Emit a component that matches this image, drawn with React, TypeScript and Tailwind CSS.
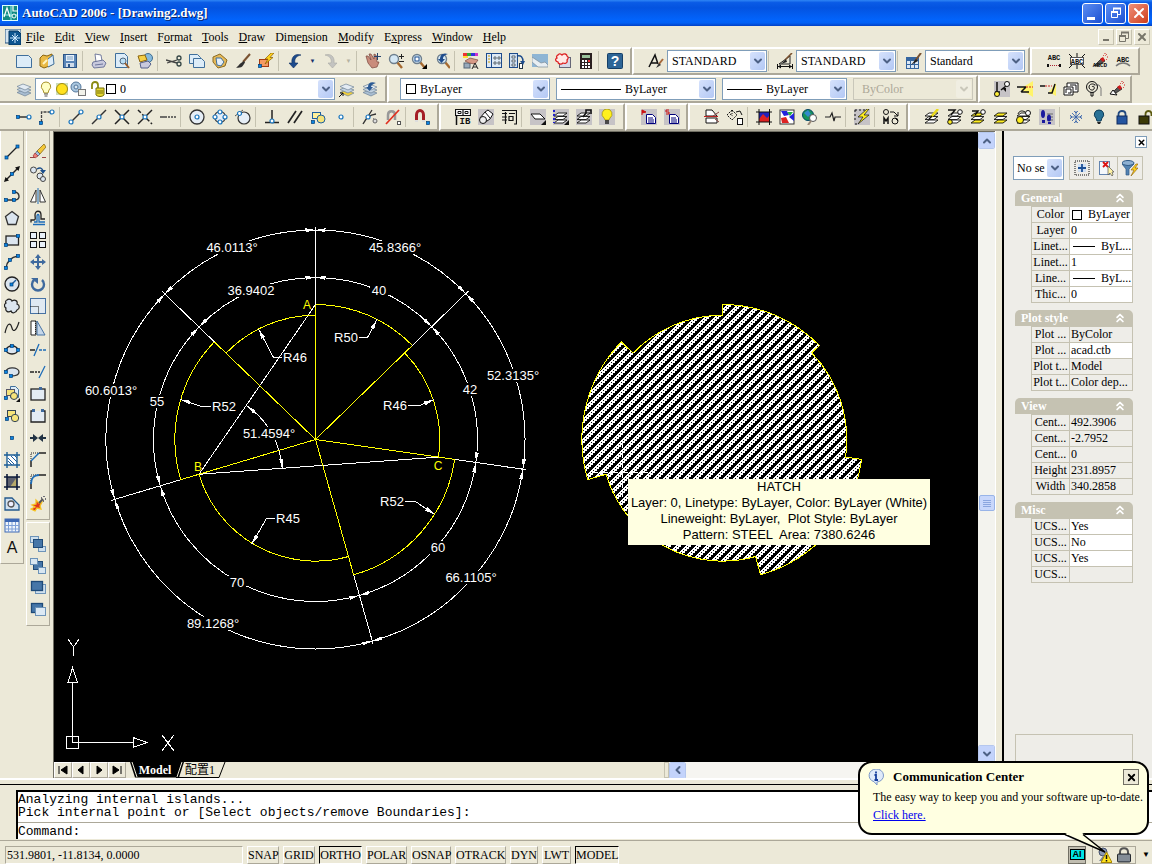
import type { ReactNode } from 'react';
import { ChevronDown, ChevronLeft, ChevronUp, ChevronsUp, X } from 'lucide-react';

/* ---------- icons, all on a 16x16 grid ---------- */

const Dot = ({ x, y }) => <rect x={x - 1.5} y={y - 1.5} width="3" height="3" fill="#0a84e0" stroke="#023e78" strokeWidth="0.7" />;
const Ring = ({ x, y, r = 2 }) => <circle cx={x} cy={y} r={r} fill="#fff" stroke="#1874bd" strokeWidth="1.2" />;
const Gray = () => <rect width="16" height="16" fill="#c6c3c6" />;
const Page = ({ x = 0, y = 0, w = 14, h = 10 }) => (
  <path d={`M${x + 0.5} ${y + 0.5}h${w - 3}l3 3v${h - 3}h-${w}z`} fill="#dcecf8" stroke="#3f6f9c" />
);
const Sheets = ({ low = '#a9bed2' }) => (
  <g stroke="#6f8397" strokeWidth="0.7">
    <path d="M1 11.5l6-2.500 8 3-6 3z" fill={low} />
    <path d="M1 8.500l6-2.500 8 3-6 3z" fill="#c3d3e2" />
    <path d="M1 5.500l6-2.500 8 3-6 3z" fill="#e3ebf3" />
  </g>
);
const Lens = ({ x = 6, y = 6 }) => (
  <g>
    <path d={`M${x + 3} ${y + 3}l5 6`} stroke="#a66a30" strokeWidth="2.4" />
    <circle cx={x} cy={y} r="4.500" fill="#d5e8f5" stroke="#6e7f8e" strokeWidth="1.4" />
  </g>
);
const Brush = () => (
  <g>
    <path d="M15 1L8 9" stroke="#7a5230" strokeWidth="2" />
    <path d="M9 8L6 10c-2 1-2 3-5 4.500 3 .5 6 0 7-2l2-3z" fill="#2f2f2f" />
  </g>
);
const Bolt = () => <path d="M13 0L7 6h3l-3 5 8-6.500h-3L16 0z" fill="#ffd21c" stroke="#8a5b00" strokeWidth="0.7" />;
const Square = ({ x, y, s = 6, f = '#e8f0f8' }) => <rect x={x + 0.5} y={y + 0.5} width={s} height={s} fill={f} stroke="#111" />;
const Laser = () => (
  <g>
    <path d="M2 13l8-8 3 3-6 4z" fill="#555" stroke="#111" strokeWidth="0.7" />
    <path d="M8 6l3-2 2 3-2 2z" fill="#d11b1b" />
    <path d="M11 2l1 1m1-3v2m2-1l-2 2m3 1h-2m1 3l-1-1" stroke="#d11b1b" strokeDasharray="1 1" />
  </g>
);
const Stack = ({ f = '#fff' }) => (
  <g stroke="#111" fill={f} strokeWidth="0.9">
    <path d="M1 14h9l4-3H5z" />
    <path d="M1 10.500h9l4-3H5z" fill="#fff" />
    <path d="M1 7h9l4-3H5z" />
  </g>
);

const icons: Record<string, ReactNode> = {
  // standard
  new: <Page x={0} y={2} w={15} h={12} />,
  open: <g><path d="M1 5l3-3 4 1 5-2v11l-8 3-4-2z" fill="#e9b944" stroke="#8b6510" /><path d="M9 6l5-4 1 9-6 3" fill="#dcecf8" stroke="#3f6f9c" /><path d="M4 11l4-4" stroke="#fff3c0" strokeWidth="2" /></g>,
  save: <g><rect x="1.500" y="1.500" width="13" height="13" fill="#5b86b8" stroke="#2c5588" /><rect x="4" y="2" width="8" height="6" fill="#e6f0fa" /><path d="M5 4h6M5 6h6" stroke="#7da0c4" /><rect x="4" y="10" width="8" height="4" fill="#d0dcea" /><rect x="6" y="11" width="2" height="3" fill="#2c5588" /></g>,
  print: <g stroke="#55608a" strokeWidth="0.8"><path d="M4 1l6 1 1 6-6 1z" fill="#fff" /><path d="M2 9l10-2 3 3-2 4-10 1-2-3z" fill="#c8c9dd" /><path d="M4 12l8-1" /></g>,
  preview: <g><Page x={1} y={0} w={12} h={14} /><circle cx="9" cy="8" r="3" fill="#b9def5" stroke="#51677c" /><path d="M11 10l4 5" stroke="#9a5d2a" strokeWidth="2" /></g>,
  publish: <g><circle cx="11" cy="5" r="4.500" fill="#86b9dc" stroke="#416e91" /><path d="M1 3l7-1 2 5-7 2z" fill="#f5cf45" stroke="#8b6510" /><path d="M3 10l8-2 3 3-3 4-7 0z" fill="#c8c9dd" stroke="#55608a" /></g>,
  cut: <g><path d="M0 7l11 3M1 10l10-3" stroke="#444" strokeWidth="1.300" /><circle cx="13" cy="5" r="2" fill="none" stroke="#344" strokeWidth="1.300" /><circle cx="13" cy="11" r="2" fill="none" stroke="#344" strokeWidth="1.300" /></g>,
  copyclip: <g><Page x={0} y={1} w={11} h={9} /><Page x={4} y={5} w={11} h={9} /></g>,
  paste: <g><path d="M1 4l7-3 7 6-2 6-7 2-5-6z" fill="#e5b958" stroke="#8b6a22" /><path d="M4 5l5 0 3 4-3 4-4-1z" fill="#e4eef8" stroke="#3f6f9c" /></g>,
  match: <Brush />,
  bedit: <g><rect x="1.500" y="6.500" width="9" height="7" fill="#f59a62" stroke="#a33b14" /><Bolt /><Dot x={2} y={13} /></g>,
  undo: <path d="M14 2c-6-2-10 2-9 8H2l4.500 5L11 10H8c-1-4 1-7 6-8z" fill="#1d4b8c" stroke="#0e2f61" strokeWidth="0.600" />,
  redo: <path d="M2 2c6-2 10 2 9 8h3l-4.500 5L5 10h3c1-4-1-7-6-8z" fill="#c3c3c0" stroke="#a9a9a4" strokeWidth="0.600" />,
  pan: <g><path d="M1 3l2 0 3 4-2-6 2 0 3 5 0-5 2 1 1 7 2 0-2 5-5 1-4-5z" fill="#c98c7c" stroke="#7a463c" strokeWidth="0.700" /><path d="M12.500 0v7M9 3.500h7" stroke="#29456d" /></g>,
  zoomrt: <g><Lens /><path d="M13.500 1v5M11 3.500h5M11 8.500h5" stroke="#222" /></g>,
  zoomwin: <g><Lens /><rect x="4" y="4" width="4" height="4" fill="#fff" stroke="#1c4e90" /><path d="M16 11v5h-5z" fill="#000" /></g>,
  zoomprev: <g><Lens x={8} /><path d="M14 1C8-1 6 3 6 6H4l3.500 4L11 6H9c0-2 1-4 5-5z" fill="#1d4b8c" /></g>,
  props: <g><rect width="4" height="3" fill="#e33" /><rect x="4" width="4" height="3" fill="#3a3" /><rect x="8" width="4" height="3" fill="#33d" /><rect x="12" width="3" height="3" fill="#c3c" /><rect y="3" width="5" height="2" fill="#fd3" /><rect x="1" y="10" width="6" height="5" fill="#9ab" stroke="#567" /><path d="M2 8l5-3 8 2-3 4-6-1z" fill="#d79a86" stroke="#7a463c" strokeWidth="0.700" /><path d="M9 16l3-6 3 6m-5-2h4" stroke="#222" fill="none" /></g>,
  dc: <g><rect x="0.500" y="0.500" width="15" height="14" fill="#dfeaf5" stroke="#1d4b8c" /><path d="M5.500 0v15" stroke="#1d4b8c" /><path d="M2 3h2M2 6h2M2 9h2" stroke="#c90" /><path d="M8 4h2v2H8zM12 4h2v2h-2zM8 9h2v2H8zM12 9h2v2h-2z" fill="#fff" stroke="#234" strokeWidth="0.700" /></g>,
  palettes: <g><rect x="0.500" y="0.500" width="8" height="14" fill="#cfdff0" stroke="#1d4b8c" /><path d="M3 3h3v2H3zM3 7h3v2H3zM3 11h3v2H3z" fill="#fff" stroke="#234" strokeWidth="0.700" /><path d="M8 3c4-1 6 1 6 6" fill="none" stroke="#1d4b8c" strokeWidth="1.500" /><rect x="10.500" y="10.500" width="3" height="5" fill="#fff" stroke="#234" /><path d="M11 8h5l-2 4z" fill="#1d4b8c" /></g>,
  ssm: <g><rect y="1" width="16" height="13" fill="#8eb5d4" /><path d="M0 4l9 6 4-1 3 3v2H6L0 9z" fill="#e8eef2" stroke="#7d8c98" strokeWidth="0.700" /></g>,
  markup: <g><rect x="4.500" y="4.500" width="11" height="10" fill="#d8d8e8" stroke="#667" /><path d="M3 2c1-2 3-1 4 0 2-2 5-1 5 1 2 1 1 3 0 4 1 3-2 4-4 3-2 2-5 1-5-1-3-1-3-3-1-4-1-1 0-3 1-3z" fill="#ffe9e6" stroke="#d22" strokeWidth="1.300" /></g>,
  calc: <g><rect x="2" y="0" width="12" height="16" fill="#2b2020" /><rect x="4" y="2" width="8" height="3" fill="#9ac29a" /><path d="M4 8h8M4 11h8M4 14h8" stroke="#fff" strokeWidth="2" strokeDasharray="2 1" /><rect x="10" y="7" width="2" height="2" fill="#e33" /></g>,
  help: <g><rect x="0.500" y="0.500" width="15" height="15" rx="1" fill="#2d6596" stroke="#153f66" /><text x="8" y="13" fontSize="14" fontWeight="bold" textAnchor="middle" fill="#fff" fontFamily="Liberation Sans">?</text></g>,
  textstyle: <g><path d="M1 14L7 2l3 9M3 10h6" fill="none" stroke="#111" strokeWidth="1.500" /><path d="M15 6l-4 5" stroke="#a6683a" strokeWidth="2" /><path d="M11 10l-3 5 5-3z" fill="#333" /></g>,
  dimstyle: <g><path d="M13 3v8L2 11z" fill="none" stroke="#222" /><path d="M15 0L8 7" stroke="#7a5230" strokeWidth="1.600" /><path d="M9 6l-5 5 6-2z" fill="#222" /><path d="M0 13.500h16M.5 11v5M15.500 11v5" stroke="#111" /><path d="M1 13.500l3-2v4zM15 13.500l-3-2v4z" fill="#111" /></g>,
  tablestyle: <g><rect x="0.500" y="4.500" width="12" height="11" fill="#dbe8f6" stroke="#3566a0" /><path d="M0 6.500h13" stroke="#3566a0" strokeWidth="3" /><path d="M4.500 5v10M8.500 5v10M1 11.500h11" stroke="#3566a0" /><path d="M15 0L9 8" stroke="#7a5230" strokeWidth="2" /><path d="M10 6l-5 6 7-4z" fill="#222" /></g>,
  // express text
  abc1: <g><text x="8" y="7" fontSize="7" textAnchor="middle" fontWeight="bold" fontFamily="Liberation Mono">ABC</text><path d="M2 12.500h12" stroke="#a23" strokeDasharray="1 1" /><path d="M1 11h2v3H1zM13 11h2v3h-2z" fill="#111" /></g>,
  abc2: <g><path d="M0 1l3 3M16 1l-3 3M0 15l3-3M16 15l-3-3M8 0v4M8 12v4" stroke="#111" /><rect x="1.500" y="4.500" width="13" height="7" fill="#fff" stroke="#555" /><text x="8" y="10.500" fontSize="7" textAnchor="middle" fontWeight="bold" fontFamily="Liberation Mono">ABC</text></g>,
  abc3: <g><Laser /><text x="8" y="14" fontSize="6" textAnchor="middle" fontWeight="bold" fontFamily="Liberation Mono">ABCD</text></g>,
  abc4: <g><text x="8" y="9" fontSize="7" textAnchor="middle" fontWeight="bold" fontFamily="Liberation Mono">ABC</text><path d="M1 13c4-4 10-4 14 0" fill="none" stroke="#777" strokeWidth="1.500" /></g>,
  // layers
  layers: <Sheets />,
  laymcur: <g><Sheets low="#f0cf3c" /><path d="M0 16l4-4M1 12h3v3" stroke="#111" fill="none" /></g>,
  layprev: <g><Sheets /><path d="M14 2C9 0 6 2 6 6H4l3.500 4L11 6H9c0-2 2-3 5-4z" fill="#2b5a94" /></g>,
  bulb: <g><path d="M8 1a4.500 4.500 0 0 0-3 8l1 3h4l1-3a4.500 4.500 0 0 0-3-8z" fill="#ffffc4" stroke="#a8922c" /><path d="M6 13h4M6.500 15h3" stroke="#555" /></g>,
  sun: <g><rect x="2" y="2" width="12" height="12" fill="#cdb" /><circle cx="8" cy="8" r="5.500" fill="#ffe11f" stroke="#a08b10" /></g>,
  vpfreeze: <g><circle cx="6" cy="6" r="5" fill="#a9c6df" stroke="#54779b" /><circle cx="6" cy="6" r="2" fill="#dce9f4" stroke="#54779b" /><rect x="8.500" y="8.500" width="7" height="6" fill="#f2f2ea" stroke="#777" /></g>,
  unlock: <g><path d="M2 8V4c0-4 6-4 6 0v3" fill="none" stroke="#8a8a12" strokeWidth="1.800" /><path d="M6 7h8v7c-2 2-6 2-8 0z" fill="#e6d832" stroke="#77700c" /><path d="M7 10h6M7 12h6" stroke="#77700c" /></g>,
  // express blocks
  blk1: <g><Gray /><path d="M3 1v10M1 11h5M7 9l5-4" stroke="#111" strokeWidth="1.500" /><circle cx="3" cy="13" r="2.500" fill="#ffef3a" stroke="#111" /><circle cx="13" cy="3" r="2.500" fill="#fff" stroke="#111" /><path d="M8 7h4v4z" fill="#111" /></g>,
  blk2: <g><path d="M16 0v16L3 8z" fill="#fff46a" /><path d="M0 6h9M4 11h8M9 6l-5 5" stroke="#111" strokeWidth="1.500" /><path d="M9 6h7" stroke="#c22" strokeDasharray="2 1" /></g>,
  blk3: <g><path d="M16 2v13L9 11z" fill="#fff46a" /><path d="M0 5h5M8 12h4l3-9" stroke="#111" strokeWidth="1.500" fill="none" /><path d="M5 5h7" stroke="#c22" strokeDasharray="2 1" /></g>,
  blk4: <g fill="none" stroke="#111"><path d="M4 6V2h11v9h-5" fill="#fff" /><path d="M1 6h9v8H1z" fill="#fff" /><path d="M3 12V8h5v4H5M7 4h6v5" /></g>,
  blk5: <g fill="none" stroke="#111"><path d="M8 4h5l2 3v8" stroke="#777" /><circle cx="6" cy="6" r="5.500" /><path d="M6 6c1-2 3 0 2 2s-5 1-5-2 4-4 6-2M5 11v4h2v-4" /></g>,
  erasex: <g><Laser /><path d="M1 13l3-4 4 5z" fill="#fff" stroke="#111" /></g>,
  // object snap
  ostrack: <g><path d="M2 8h10" stroke="#333" strokeWidth="1.500" /><Dot x={2} y={8} /><Ring x={13} y={8} /></g>,
  osfrom: <g><path d="M2.500 13V3h10" fill="none" stroke="#444" strokeWidth="1.300" strokeDasharray="3 1" /><Dot x={2} y={14} /><Ring x={13} y={3} /></g>,
  osend: <g><path d="M2 14L14 2" stroke="#333" strokeWidth="1.500" /><Ring x={3} y={13} /><Ring x={13} y={3} /></g>,
  osmid: <g><path d="M1 15L15 1" stroke="#333" strokeWidth="1.500" /><Ring x={8} y={8} /></g>,
  osint: <g><path d="M1 1l14 14M1 15L15 1" stroke="#222" strokeWidth="1.500" /><Ring x={8} y={8} /></g>,
  osapp: <g><path d="M1 15L15 1" stroke="#222" strokeWidth="1.500" /><path d="M1 1l14 14" stroke="#222" strokeWidth="1.500" strokeDasharray="4 2" /><Ring x={8} y={8} /></g>,
  osext: <path d="M0 8h16" stroke="#444" strokeWidth="1.500" strokeDasharray="7 1 2 1 2 1 2" />,
  oscen: <g><circle cx="8" cy="8" r="7" fill="#e6eef6" stroke="#333" strokeWidth="1.300" /><Ring x={8} y={8} /></g>,
  osqua: <g><circle cx="8" cy="8" r="5.500" fill="#e6eef6" stroke="#333" strokeWidth="1.200" /><Ring x={8} y={3} /><Ring x={8} y={13} /><Ring x={3} y={8} /><Ring x={13} y={8} /></g>,
  ostan: <g><circle cx="9" cy="9" r="6" fill="#e6eef6" stroke="#333" strokeWidth="1.200" /><path d="M0 7L8 1" stroke="#555" /><Ring x={4.500} y={4.500} /></g>,
  osper: <g><path d="M8 1v12M1 13.500h14" stroke="#222" strokeWidth="1.500" /><Ring x={8} y={12} /></g>,
  ospar: <path d="M1 14L9 2M7 14l8-12" stroke="#222" strokeWidth="1.700" />,
  osins: <g><rect x="2.500" y="3.500" width="8" height="6" fill="#fff09a" stroke="#1d5f9f" /><circle cx="11" cy="10" r="4" fill="#f5e37a" stroke="#1d5f9f" /><Dot x={3} y={13} /></g>,
  osnod: <Ring x={8} y={8} />,
  osnea: <g><path d="M1 15c3-6 6-9 13-10M5 9l5-8" fill="none" stroke="#333" strokeWidth="1.300" /><Ring x={6} y={8} /><path d="M11 9l4 4" stroke="#888" /><circle cx="13" cy="12" r="2" fill="#ddd" stroke="#666" /></g>,
  osnone: <g><path d="M3 11V6c0-5 7-5 7 0v5" fill="none" stroke="#999" strokeWidth="2.500" /><path d="M1 15L14 1" stroke="#e03020" strokeWidth="1.700" /><rect x="12.500" y="12.500" width="3" height="3" fill="#fff" stroke="#555" /></g>,
  ossnap: <g><path d="M2.500 12V6c0-6 7-6 7 0v6" fill="none" stroke="#a51d25" strokeWidth="3" /><path d="M1 12h3M8 12h3" stroke="#ddd" strokeWidth="2" /><Dot x={14} y={14} /></g>,
  // express standard
  lib: <g fill="none" stroke="#111"><path d="M.5.5h15v6H.5zM8 .5v6" fill="#fff" strokeWidth="1.200" /><path d="M3 2.500h3v2H3zM10 2.500h3v2h-3z" /><path d="M1.500 6v10" strokeWidth="1.500" /><text x="10" y="15" fontSize="9" fontWeight="bold" textAnchor="middle" stroke="none" fill="#111" fontFamily="Liberation Mono">IB</text></g>,
  cam: <g><Gray /><path d="M2 9l5-6 3-2 5 4-3 5-6 4z" fill="#fff" stroke="#111" /><circle cx="5" cy="11" r="3.500" fill="#eee" stroke="#111" /><path d="M7 3l5 6" stroke="#111" /></g>,
  vars: <path d="M1 1.500h14.500V15H13M4.500 3v12M1 4.500h5M1 8h5M1 11h5M8 4.500h6M8 7.500h4v4H8z" fill="none" stroke="#111" strokeWidth="1.200" />,
  ext1: <g><Gray /><path d="M1 5h9l5 5H5z" fill="#fff" stroke="#111" /><path d="M16 11v5h-5z" /></g>,
  ext2: <g><Gray /><Stack /><path d="M1 1v13" stroke="#22c" strokeWidth="2" strokeDasharray="2 2" /><path d="M16 11v5h-5z" /></g>,
  ext3: <g><Gray /><Stack /><path d="M7 8l3-4V1h5v4" fill="none" stroke="#111" strokeWidth="1.600" /></g>,
  lamp: <g><Gray /><path d="M8 0a5 5 0 0 0-3 9l1 2h4l1-2a5 5 0 0 0-3-9z" fill="#fff01e" stroke="#8a7a00" strokeWidth="0.600" /><path d="M6 12h4M6 14h4" stroke="#222" strokeWidth="1.500" /></g>,
  xp: <g><Gray /><path d="M1 1v5M1 1l4 2-4 1" stroke="#c11" fill="#c11" /><path d="M5.500 5.500h6l3 3v6h-9z" fill="#fff" stroke="#00007b" /><path d="M7 9h5M7 11h6M7 13h6" stroke="#00007b" /></g>,
  xs: <g><Gray /><path d="M5 1H2v2h3v2H2" stroke="#c11" fill="none" /><path d="M5.500 5.500h6l3 3v6h-9z" fill="#fff" stroke="#00007b" /><path d="M7 9h5M7 11h6M7 13h6" stroke="#00007b" /></g>,
  fs1: <g fill="none" stroke="#111"><path d="M2 1h6l5 6H2zM2 9h11v5H2z" fill="#fff" /><path d="M0 7.500h14" stroke="#b22" /><path d="M15 3l-6 4M15 13l-4-3" stroke="#844" /></g>,
  fs2: <g fill="none" stroke="#111"><path d="M5 1l5 5-5 5-5-5zM5 1v4M3 5l3 2" strokeDasharray="2 1" /><path d="M9 3l4-1 2 4" /><rect x="10.500" y="9.500" width="5" height="6" fill="#fff" /></g>,
  fs3: <g><rect x="3" y="3" width="11" height="10" fill="#22b" /><path d="M3 10l4-5 4 4 3-3v7H3z" fill="#d22" /><path d="M3 0v16M13.500 0v16M0 3h16M0 13h16" stroke="#111" /></g>,
  fs4: <g><rect x="1" y="1" width="14" height="14" fill="#fff" stroke="#333" /><path d="M2 2h6l2 4-5 1zM10 8l5-4v8z" fill="#22d" /><path d="M2 9l5-1 3 6H3z" fill="#d22" /><path d="M8 3l6 0-3 4z" fill="#2a4" /></g>,
  fs5: <g><circle cx="6" cy="6" r="5.500" fill="#17945a" stroke="#046" /><path d="M2 4l4-3 3 4-3 3z" fill="#38c" /><circle cx="11" cy="9" r="3.500" fill="#fff" stroke="#555" /><path d="M9 12l-3 4" stroke="#987" strokeWidth="2" /></g>,
  fs6: <path d="M0 8h5l2-4 2 8 1-4h6" fill="none" stroke="#222" strokeWidth="1.200" />,
  fs7: <g><Gray /><path d="M1 1h12M1 1v12M1 15h3" stroke="#111" strokeDasharray="2 2" /><path d="M13 0L4 8h5l-5 7 11-9h-5l5-6z" fill="#ffee20" stroke="#111" strokeWidth="0.700" /></g>,
  fs8: <g fill="none" stroke="#111"><circle cx="3" cy="3" r="2.500" /><circle cx="12" cy="12" r="3" /><path d="M7 3h4l4 4M15 3v4h-4" /><path d="M1 15V9l2 3 2-3v6" strokeWidth="1.500" /><path d="M12 9l3 3" /></g>,
  // express layers
  el1: <g><Stack /><path d="M14 0L7 8" stroke="#eadb18" strokeWidth="2.500" /><path d="M8 7l-3 3" stroke="#111" strokeWidth="1.500" /></g>,
  el2: <g><Stack /><path d="M1 1h7l-4 5" stroke="#111" strokeWidth="1.500" fill="none" /><circle cx="3" cy="13" r="2.300" fill="#ffee20" stroke="#111" /><circle cx="13" cy="3" r="2.300" fill="#fff" stroke="#111" /></g>,
  el3: <g><Stack f="#ffee20" /><path d="M2 2h6l-3 4" stroke="#111" strokeWidth="1.500" fill="none" /><circle cx="13" cy="3" r="2.300" fill="#fff" stroke="#111" /></g>,
  el4: <Stack f="#ffee20" />,
  el5: <g><Stack /><circle cx="4" cy="11" r="3.500" fill="#ffee20" stroke="#111" /><circle cx="12" cy="4" r="2.500" fill="#fff" stroke="#111" /><path d="M2 5c1-3 4-4 7-2" fill="none" stroke="#111" /></g>,
  el6: <g><Gray /><path d="M8 5h6M8 8h6M8 11h6" stroke="#888" strokeWidth="1.500" /><ellipse cx="4" cy="5" rx="2" ry="4" fill="#1a1a9e" /><ellipse cx="10" cy="9" rx="2" ry="3.500" fill="#1a1a9e" /><path d="M3 11h3v3H3zM9 13h3v2H9z" fill="#1a1a9e" /></g>,
  el7: <path d="M8 2v12M2 8h12M4 4l8 8M12 4l-8 8M6 2l2 2 2-2M6 14l2-2 2 2M2 6l2 2-2 2M14 6l-2 2 2 2" fill="none" stroke="#2c5aa8" strokeWidth="0.800" />,
  el8: <g><path d="M8 1a4.500 4.500 0 0 0-3 8l1 3h4l1-3a4.500 4.500 0 0 0-3-8z" fill="#2a7296" stroke="#0d3c58" /><path d="M6 13h4l-1 2H7z" fill="#222" /></g>,
  el9: <g><path d="M4.500 8V5c0-4 7-4 7 0v3" fill="none" stroke="#234a80" strokeWidth="1.800" /><rect x="3" y="7" width="10" height="8" fill="#2455a0" stroke="#102c5e" /></g>,
  el10: <g><path d="M8.500 8V5c0-4 6-4 6 0v2" fill="none" stroke="#5c5a10" strokeWidth="1.800" /><rect x="2" y="7" width="10" height="8" fill="#3c3a06" stroke="#111" /></g>,
  // draw
  line: <g><path d="M2 14L14 2" stroke="#222" strokeWidth="1.300" /><Dot x={2.500} y={13.500} /><Dot x={13.500} y={2.500} /></g>,
  xline: <g><path d="M2 14L14 2" stroke="#222" strokeWidth="1.400" /><path d="M0 16l1.500-5 3.500 3.500zM16 0l-5 1.500 3.500 3.500z" fill="#111" /><Dot x={8} y={8} /></g>,
  pline: <g><path d="M2 12h9c6 0 5-8-1-8" fill="none" stroke="#333" strokeWidth="1.400" /><Dot x={2} y={12} /><Dot x={10} y={12} /><Dot x={10} y={4} /></g>,
  polygon: <path d="M8 1.500l6.500 5-2.500 8H4L1.500 6.500z" fill="#dbe5ef" stroke="#333" strokeWidth="1.300" />,
  rect: <g><rect x="2" y="4" width="12.500" height="9" fill="#dbe5ef" stroke="#222" strokeWidth="1.300" /><Dot x={2} y={13} /><Dot x={14} y={4} /></g>,
  arc: <g><path d="M2 14C3 7 7 3 14 2" fill="none" stroke="#333" strokeWidth="1.400" /><Dot x={2} y={14} /><Dot x={6} y={6} /><Dot x={14} y={2} /></g>,
  circle: <g><circle cx="8" cy="8" r="7" fill="#dbe5ef" stroke="#222" strokeWidth="1.300" /><path d="M8 8l4-4" stroke="#1d5f9f" strokeWidth="1.500" /><Dot x={7.500} y={8.500} /></g>,
  cloud: <path d="M3 2c2-2 5 0 5 1 3-2 6 0 5 3 3 1 3 5 0 6-1 3-5 4-6 1-3 2-6 0-5-3-2-1-2-4 0-5-1-1 0-3 1-3z" fill="#dbe5ef" stroke="#222" strokeWidth="1.200" />,
  spline: <path d="M1 13C4 0 7 4 8 8s4 4 7-6" fill="none" stroke="#222" strokeWidth="1.200" />,
  ellipse: <g><ellipse cx="8" cy="8" rx="6" ry="4" fill="#dbe5ef" stroke="#222" strokeWidth="1.300" /><Dot x={2} y={8} /><Dot x={14} y={8} /><Dot x={8} y={4} /></g>,
  ellarc: <g><path d="M2 8c0-6 13-5 13 0 0 3-3 4-8 4" fill="#dbe5ef" stroke="#333" strokeWidth="1.300" /><Dot x={2} y={8} /><Dot x={7} y={12} /></g>,
  insert: <g><Page x={6} y={0} w={8} h={11} /><rect x="2.500" y="3.500" width="8" height="6" fill="#f5e37a" stroke="#556" /><circle cx="10" cy="10" r="3.500" fill="#f5e37a" stroke="#345" /><Dot x={2} y={12} /><path d="M16 12v4h-4z" /></g>,
  mkblock: <g><rect x="3.500" y="2.500" width="8" height="6" fill="#f5e37a" stroke="#345" /><circle cx="11" cy="10" r="3.700" fill="#f5e37a" stroke="#345" /><Dot x={3} y={11} /></g>,
  point: <Dot x={8} y={8} />,
  hatch: <g><rect x="3" y="3" width="10" height="10" fill="#fff" /><path d="M4 6l6 6M4 9l4 4M7 4l6 6M10 3l3 3" stroke="#1d5f9f" /><path d="M3 0v16M13 0v16M0 3h16M0 13h16" stroke="#1c5e96" strokeWidth="1.400" /></g>,
  gradient: <g><rect x="3" y="3" width="10" height="10" fill="#5e6270" /><path d="M13 3v10H6z" fill="#b7aa6a" /><path d="M3 0v16M13 0v16M0 3h16M0 13h16" stroke="#0d1b3a" strokeWidth="1.600" /></g>,
  region: <g><path d="M1 14V2h7l7 7v5z" fill="#d3e2f0" stroke="#24598c" strokeWidth="1.300" /><circle cx="7" cy="8" r="3" fill="#eef" stroke="#555" strokeWidth="1.300" /></g>,
  table: <g><rect x="1" y="1" width="14" height="13" fill="#eef4fb" stroke="#3c68b4" /><path d="M1 2.500h14" stroke="#3c68b4" strokeWidth="3" /><path d="M4.500 4v10M8 4v10M11.500 4v10M1 7.500h14M1 11h14" stroke="#7ea0d8" /></g>,
  mtext: <text x="8" y="13" fontSize="16" textAnchor="middle" fontFamily="Liberation Sans">A</text>,
  // modify
  erase: <g><path d="M0 13.500h5M12 13.500h4" stroke="#944" /><path d="M14 0l2 3-6 7-3-3z" fill="#f4c838" stroke="#7a5d10" strokeWidth="0.700" /><path d="M7 7l3 3-2 2-3-2z" fill="#a8c0da" stroke="#456" strokeWidth="0.700" /><path d="M5 9l3 3-3 2-2-2z" fill="#ee8078" stroke="#933" strokeWidth="0.700" /></g>,
  copy: <g><circle cx="3.500" cy="4" r="3" fill="#dbe5ef" stroke="#444" /><circle cx="10" cy="10" r="3" fill="#dbe5ef" stroke="#444" /><circle cx="13" cy="13" r="2.500" fill="#dbe5ef" stroke="#444" /><path d="M7 3c3-2 5-1 6 2" fill="none" stroke="#1c4f8c" strokeWidth="1.500" /><path d="M10 4h6l-3 4z" fill="#1c4f8c" /></g>,
  mirror: <g><path d="M6 2v12H.5zM10 2v12h5.500z" fill="#fff" stroke="#333" /><path d="M8 0v16" stroke="#1c6cb8" /></g>,
  offset: <g fill="none"><path d="M1 12.500V10h3c2 0 1-3 1-5 0-5 6-5 6 0v4h4" stroke="#222" strokeWidth="1.300" /><path d="M3 14.500h12M4 12h3V6c0-2 2-2 2 0v6h6" stroke="#1c6cb8" strokeWidth="1.300" /></g>,
  array: <g><Square x={0} y={0} /><Square x={9} y={0} /><Square x={0} y={9} /><Square x={9} y={9} /></g>,
  move: <g fill="#3f6a9e"><path d="M7 2h2v12H7zM2 7h12v2H2z" /><path d="M8 0l3 4H5zM8 16l3-4H5zM0 8l4-3v6zM16 8l-4-3v6z" /></g>,
  rotate: <g><path d="M4 4a6 6 0 1 0 8 0" fill="none" stroke="#3f6a9e" strokeWidth="2.400" /><path d="M1 2h7v6z" fill="#3f6a9e" /></g>,
  scale: <g><rect x="0.500" y="0.500" width="15" height="15" fill="#e0e9f2" stroke="#4772a3" /><path d="M.5 8.500h8v7" fill="none" stroke="#111" strokeDasharray="1 1" /></g>,
  stretch: <g><path d="M1 1h5v14H1z" fill="#fff" stroke="#222" /><path d="M7 1l8 14H7z" fill="#c5d7ea" stroke="#4772a3" /><path d="M5.500 1v14" stroke="#222" strokeDasharray="1 1" /></g>,
  trim: <g><path d="M0 8h5" stroke="#222" strokeWidth="1.500" /><path d="M9 8h7" stroke="#1c6cb8" strokeWidth="1.500" strokeDasharray="3 1" /><path d="M4 14L9 2" stroke="#1c6cb8" strokeWidth="1.300" /></g>,
  extend: <g><path d="M0 8h4" stroke="#222" strokeWidth="1.500" /><path d="M5 8h5" stroke="#222" strokeWidth="1.500" strokeDasharray="2 1" /><path d="M9 14l6-12" stroke="#1c6cb8" strokeWidth="1.300" /></g>,
  brkpt: <g><rect x="1" y="3" width="14" height="11" fill="#e4ecf4" stroke="#222" strokeWidth="1.300" /><rect x="9" y="1" width="3" height="3" fill="#3f6a9e" /></g>,
  brk: <g><path d="M4 3H1v11h14V3h-3" fill="#e4ecf4" stroke="#222" strokeWidth="1.300" /><rect x="2" y="1" width="3" height="3" fill="#3f6a9e" /><rect x="11" y="1" width="3" height="3" fill="#3f6a9e" /></g>,
  join: <g fill="#234"><path d="M0 7h4v2H0zM12 7h4v2h-4z" /><path d="M3 4l5 4-5 4zM13 4L8 8l5 4z" /></g>,
  chamfer: <g><path d="M1 15V9M9 1h7" stroke="#222" strokeWidth="1.500" /><path d="M1 9V1h8" fill="none" stroke="#222" strokeDasharray="1 1" /><path d="M1 9l8-8" stroke="#1c6cb8" strokeWidth="1.500" /></g>,
  fillet: <g><path d="M1 15V9M9 1h7" stroke="#222" strokeWidth="1.500" /><path d="M1 9V1h8" fill="none" stroke="#222" strokeDasharray="1 1" /><path d="M1 10c0-6 3-9 8-9" fill="none" stroke="#1c6cb8" strokeWidth="1.800" /></g>,
  explode: <g><path d="M1 13l4-2-3-2 4-1 0-4 3 3 3-1-2 4 1 3-4-1-2 3z" fill="#e0351c" stroke="#f6c423" strokeWidth="1.300" /><path d="M9 7l4-4" stroke="#555" strokeWidth="2" /><path d="M11 2h1M14 0v1M15 3h1M13 5h1" stroke="#445" strokeWidth="1.500" /></g>,
  ord1: <g><rect x="0.500" y="0.500" width="8" height="6" fill="#cfe0ee" stroke="#6d93b8" /><rect x="8.500" y="10.500" width="7" height="5" fill="#cfe0ee" stroke="#6d93b8" /><rect x="3.500" y="3.500" width="9" height="8" fill="#4676a8" stroke="#1f4a78" /></g>,
  ord2: <g><rect x="3.500" y="3.500" width="9" height="8" fill="#4676a8" stroke="#1f4a78" /><rect x="0.500" y="0.500" width="7" height="6" fill="#d8e6f1" stroke="#6d93b8" /><rect x="8.500" y="9.500" width="7" height="6" fill="#d8e6f1" stroke="#6d93b8" /></g>,
  ord3: <g><rect x="5.500" y="4.500" width="10" height="9" fill="#cfe0ee" stroke="#6d93b8" /><rect x="1.500" y="1.500" width="11" height="9" fill="#4676a8" stroke="#1f4a78" strokeWidth="1.300" /></g>,
  ord4: <g><rect x="1.500" y="1.500" width="11" height="9" fill="#4676a8" stroke="#1f4a78" strokeWidth="1.300" /><rect x="5.500" y="5.500" width="10" height="8" fill="#dce9f4" stroke="#6d93b8" /></g>,
  // properties palette
  pick: <g><rect x="1" y="1" width="14" height="14" fill="none" stroke="#111" strokeDasharray="1 1" /><rect x="4" y="4" width="8" height="8" fill="#cfe0f4" /><path d="M8 4v8M4 8h8" stroke="#1c5096" strokeWidth="1.800" /></g>,
  selobj: <g><rect x="1.500" y="1.500" width="10" height="13" fill="#f4f8fc" stroke="#6284b0" /><path d="M5 2l5 5M10 2L5 7" stroke="#d11" strokeWidth="1.800" /><path d="M10 6v9l2-2 2 3 1-1-1-3h2z" fill="#fff3a6" stroke="#555" strokeWidth="0.700" /></g>,
  filter: <g><ellipse cx="6" cy="3" rx="6" ry="2.500" fill="#8db0d2" stroke="#2f5a86" /><path d="M0 4l4 5v6h3V9l5-5c-2 2-9 2-12 0z" fill="#5383b2" stroke="#2f5a86" strokeWidth="0.700" /><path d="M14 4l-5 6h3l-3 6 7-8h-3l3-4z" fill="#ffd21c" stroke="#8a5b00" strokeWidth="0.600" /></g>,
  // tray
  comm: <g><circle cx="7" cy="5" r="4" fill="#8b98b4" stroke="#46526e" /><path d="M3 14l4-5 3 5z" fill="#77839e" /><path d="M3 1l9 7" stroke="#46526e" /><path d="M10.500 5l5.500 10.500H5z" fill="#ffe21c" stroke="#a88600" /><path d="M10.500 8v4M10.500 13v1.500" stroke="#111" strokeWidth="1.500" /></g>,
  padlock: <g><path d="M4 7V5c0-5 8-5 8 0v2" fill="none" stroke="#555" strokeWidth="2" /><rect x="1.500" y="7" width="13" height="8" rx="1" fill="#6b7480" stroke="#262a30" /><path d="M2 9h12M2 11h12M2 13h12" stroke="#b3bac2" strokeWidth="0.700" /></g>,
};

const Icon = ({ name }) => (
  <svg viewBox="0 0 16 16" className="h-4 w-4 shrink-0" fill="#111" aria-hidden="true">
    {icons[name]}
  </svg>
);

/* ---------- toolbars ---------- */

const ToolButton = ({ name }) => (
  <button type="button" aria-label={name} className="flex h-[22px] w-[23px] shrink-0 items-center justify-center">
    <Icon name={name} />
  </button>
);

const Sep = () => <span className="ml-px mr-1 h-5 w-px shrink-0 bg-[#c5c2b0]" />;

const Flyout = ({ dim = false }) => (
  <span className={`w-[13px] shrink-0 text-center text-[6px] ${dim ? 'text-[#b5b2a2]' : 'text-[#16306b]'}`}>▼</span>
);

// "|" is a separator, "v" / "w" are flyout arrows
const Tools = ({ list }) =>
  list.split(' ').map((name, i) => {
    if (name === '|') return <Sep key={i} />;
    if (name === 'v') return <Flyout key={i} />;
    if (name === 'w') return <Flyout key={i} dim />;
    return <ToolButton key={i} name={name} />;
  });

const Bar = ({ children, className = '' }) => (
  <div className={`flex h-7 shrink-0 items-center border-2 border-b-[#aca899] border-l-white border-r-[#aca899] border-t-white ${className}`}>
    {children}
  </div>
);

const Arrow = ({ dim = false }) => (
  <span className={`pointer-events-none flex h-[18px] w-[15px] shrink-0 items-center justify-center rounded-[2px] ${dim ? 'bg-[#f0eee2] text-[#c9c7ba]' : 'bg-gradient-to-br from-[#d6e2fc] to-[#b3c8f4] text-[#4d6185]'}`}>
    <ChevronDown size={12} strokeWidth={4} />
  </span>
);

const Combo = ({ label, value, width, children = null, dim = false }) => (
  <div className={`flex h-[22px] shrink-0 items-center border pr-px ${dim ? 'border-[#c9c7ba] bg-[#ece9d8] text-[#aca899]' : 'border-[#7f9db9] bg-white'} ${width}`}>
    {children}
    <select aria-label={label} disabled={dim} className="min-w-0 flex-1 appearance-none bg-transparent pl-1 outline-none">
      <option>{value}</option>
    </select>
    <Arrow dim={dim} />
  </div>
);

const VBar = ({ list, className = '' }) => (
  <div className={`flex w-6 flex-col items-center border-b border-l border-r border-b-[#aca899] border-l-white border-r-[#aca899] pb-1 pt-[10px] ${className}`}>
    {list.split(' ').map((name) => (
      <ToolButton key={name} name={name} />
    ))}
  </div>
);

/* ---------- drawing ---------- */

const rad = (a: number) => (a * Math.PI) / 180;
const at = (cx, cy, r, a) => [cx + r * Math.cos(rad(a)), cy - r * Math.sin(rad(a))];
const arcPath = (cx, cy, r, a, b) => {
  const [x1, y1] = at(cx, cy, r, a);
  const [x2, y2] = at(cx, cy, r, b);
  return `M${x1} ${y1}A${r} ${r} 0 0 0 ${x2} ${y2}`;
};

const CX = 315.5;
const CY = 438.5;
// start angle, end angle, radius in px
const sectors = [
  [44.16, 90, 135],
  [90, 136.01, 124.3],
  [136.01, 196.61, 140.6],
  [196.61, 285.74, 121.6],
  [285.74, 351.85, 140.6],
  [351.85, 404.16, 124.3],
];
const rayEnd = [135, 135, 140.6, 140.6, 140.6, 140.6];

const outline = (cx, cy) =>
  sectors
    .map(([a, b, r], i) => {
      const [x1, y1] = at(cx, cy, r, a);
      const [x2, y2] = at(cx, cy, r, b);
      return `${i ? 'L' : 'M'}${x1} ${y1}A${r} ${r} 0 0 0 ${x2} ${y2}`;
    })
    .join('') + 'Z';

// one 10px tile of the STEEL hatch, built from whole pixels along the diagonal
const steelTile = () => {
  let d = '';
  for (let y = 0; y < 10; y++) {
    for (let x = 0; x < 10; x++) {
      const k = (x + y) % 10;
      const on = k < 2 || k === 3 || k === 4 || ((k === 2 || k === 5) && x % 2 === 0);
      if (on) d += `M${x} ${y}h1v1h-1z`;
    }
  }
  return d;
};

// arrow head with its tip at x,y pointing along deg (screen degrees)
const Head = ({ x, y, deg }) => <path d="M0 0L-10 -2V2Z" fill="#fff" stroke="none" transform={`translate(${x} ${y}) rotate(${deg})`} />;

const DimArc = ({ cx, cy, r, a, b }) => {
  const [x1, y1] = at(cx, cy, r, a);
  const [x2, y2] = at(cx, cy, r, b);
  const lean = (5 / r) * (180 / Math.PI);
  return (
    <g>
      <path d={arcPath(cx, cy, r, a, b)} />
      <Head x={x1} y={y1} deg={90 - a - lean} />
      <Head x={x2} y={y2} deg={-90 - b + lean} />
    </g>
  );
};

const dimTexts = [
  [232, 247, '46.0113°'], [395, 247, '45.8366°'], [251, 290, '36.9402'], [379, 290, '40'],
  [470, 389, '42'], [513, 375, '52.3135°'], [111, 390, '60.6013°'], [157, 401, '55'],
  [295, 357, 'R46'], [346, 337, 'R50'], [395, 405, 'R46'], [224, 406, 'R52'],
  [269, 433, '51.4594°'], [392, 501, 'R52'], [288, 518, 'R45'], [438, 547, '60'],
  [471, 577, '66.1105°'], [237, 582, '70'], [213, 623, '89.1268°'],
];

const leaders = [
  [[359, 336.5], [367.5, 336.5], [377, 318.5]],
  [[282, 356.5], [273.5, 356.5], [258.5, 328]],
  [[211, 405.5], [201.5, 405.5], [180.5, 398.5]],
  [[408, 404.5], [419.5, 404.5], [434, 398.5]],
  [[405, 500.5], [415.5, 500.5], [434.5, 513.5]],
  [[275, 517.5], [266.5, 517.5], [251.5, 543.5]],
];

const Drawing = () => {
  const B = at(CX, CY, 121.6, 196.61);
  const C = at(CX, CY, 124.3, 351.85);
  return (
    <svg width="924" height="631" viewBox="54 131 924 631" className="block shrink-0" fill="none" fontFamily="Liberation Sans">
      <defs>
        <pattern id="steel" width="10" height="10" patternUnits="userSpaceOnUse">
          <path d={steelTile()} fill="#fff" shapeRendering="crispEdges" />
        </pattern>
      </defs>
      <g stroke="#fff" shapeRendering="crispEdges">
        {sectors.map(([a, b], i) => {
          const [x1, y1] = at(CX, CY, rayEnd[i], a);
          const [x2, y2] = at(CX, CY, 213, a);
          return (
            <g key={a}>
              <DimArc cx={CX} cy={CY} r={209.5} a={a} b={b} />
              <DimArc cx={CX} cy={CY} r={162} a={a} b={b} />
              <path d={`M${x1} ${y1}L${x2} ${y2}`} />
            </g>
          );
        })}
        <DimArc cx={B[0]} cy={B[1]} r={83.5} a={3.8} b={55.4} />
        <path d={`M${CX} 303.500L${B[0]} ${B[1]}L${C[0]} ${C[1]}`} />
      </g>
      <g stroke="#ff0" shapeRendering="crispEdges">
        {sectors.map(([a, b, r], i) => {
          const [x, y] = at(CX, CY, rayEnd[i], a);
          return <path key={a} d={`${arcPath(CX, CY, r, a, b)}M${CX} ${CY}L${x} ${y}`} />;
        })}
      </g>
      {leaders.map(([p, q, t]) => (
        <g key={t.join()} stroke="#fff" shapeRendering="crispEdges">
          <path d={`M${p}L${q}L${t}`} />
          <Head x={t[0]} y={t[1]} deg={(Math.atan2(t[1] - q[1], t[0] - q[0]) * 180) / Math.PI} />
        </g>
      ))}
      {dimTexts.map(([x, y, s]: any) => (
        <g key={`${x}${s}`}>
          {s[0] !== 'R' && <rect x={x - s.length * 3 - 3} y={y - 7} width={s.length * 6 + 6} height="13" fill="#000" />}
          <text x={x} y={y + 4} fontSize="13" textAnchor="middle" fill="#fff">{s}</text>
        </g>
      ))}
      <g fill="#ff0" fontSize="12" textAnchor="middle">
        <text x="307" y="308">A</text>
        <text x="198" y="470">B</text>
        <text x="438" y="469">C</text>
      </g>

      <path d={outline(722.5, 438.5)} fill="url(#steel)" stroke="#ff0" shapeRendering="crispEdges" />
      <g stroke="#fff" strokeDasharray="3 2" shapeRendering="crispEdges">
        <path d="M594.500 471.500h56M622.500 444v52" />
      </g>

      <g stroke="#fff" shapeRendering="crispEdges">
        <path d="M66.500 735.500h12v12h-12zM72.500 741.500V681M72.500 741.500H133M72.500 667L68 681.500h9.500zM147 741.500l-14-5v10z" />
        <path d="M162 734l12 16M174 734l-12 16M68 638l5.500 8v9M79 638l-5.500 8" />
      </g>
    </svg>
  );
};

/* ---------- properties palette ---------- */

const SampleLine = () => <span className="mr-1.5 ml-0.5 h-px w-[22px] shrink-0 bg-black" />;

// label, value, prefix, white cell
const sections = [
  ['General', [
    ['Color', 'ByLayer', 'swatch', true], ['Layer', '0', '', true], ['Linet...', 'ByL...', 'line', true],
    ['Linet...', '1', '', true], ['Line...', 'ByL...', 'line', true], ['Thic...', '0', '', true],
  ]],
  ['Plot style', [
    ['Plot ...', 'ByColor', '', false], ['Plot ...', 'acad.ctb', '', true], ['Plot t...', 'Model', '', false], ['Plot t...', 'Color dep...', '', false],
  ]],
  ['View', [
    ['Cent...', '492.3906', '', false], ['Cent...', '-2.7952', '', false], ['Cent...', '0', '', false], ['Height', '231.8957', '', false], ['Width', '340.2858', '', false],
  ]],
  ['Misc', [
    ['UCS...', 'Yes', '', true], ['UCS...', 'No', '', true], ['UCS...', 'Yes', '', true], ['UCS...', '', '', false],
  ]],
];

const Section = ({ title, rows }) => (
  <section className="mb-[7px]">
    <h2 className="flex h-4 items-center justify-between rounded-t-[5px] bg-[#c5c2b2] pl-1.5 pr-1.5 font-bold text-white">
      {title}
      <ChevronsUp size={14} strokeWidth={3} />
    </h2>
    <table className="ml-4 w-[102px] table-fixed border-collapse">
      <tbody>
        {rows.map(([label, value, prefix, white], i) => (
          <tr key={i} className="h-4">
            <th className="w-[38px] overflow-hidden whitespace-nowrap border border-[#c5c2b2] p-0 text-center font-normal leading-[15px]">{label}</th>
            <td className={`border border-[#c5c2b2] p-0 leading-[15px] ${white ? 'bg-white' : ''}`}>
              <div className="flex items-center overflow-hidden whitespace-nowrap pl-px">
                {prefix === 'swatch' && <span className="ml-px mr-1.5 h-[10px] w-[10px] shrink-0 border border-black" />}
                {prefix === 'line' && <SampleLine />}
                {value}
              </div>
            </td>
          </tr>
        ))}
      </tbody>
    </table>
  </section>
);

const Palette = () => (
  <aside className="flex w-[150px] shrink-0 flex-col border-l-2 border-black bg-[#eeede8] pb-1 pl-[11px] pr-[19px] pt-[5px]">
    <button type="button" aria-label="Close palette" className="-mr-3.5 flex h-3 w-3 items-center justify-center self-end border border-[#7f9db9] bg-white">
      <X size={9} strokeWidth={4} />
    </button>
    <div className="-ml-0.5 -mr-2.5 mb-[10px] mt-2 flex items-center gap-[5px]">
      <div className="flex h-6 w-[51px] items-center border border-[#7f9db9] bg-white pr-px">
        <select aria-label="Selection" className="min-w-0 flex-1 appearance-none bg-transparent pl-[3px]">
          <option>No se</option>
        </select>
        <Arrow />
      </div>
      <div className="flex h-6 border border-[#c5c2b2]">
        {['pick', 'selobj', 'filter'].map((name) => (
          <button key={name} type="button" aria-label={name} className="flex w-6 items-center justify-center border-r border-[#c5c2b2] last:border-r-0">
            <Icon name={name} />
          </button>
        ))}
      </div>
    </div>
    {sections.map(([title, rows]) => (
      <Section key={title as string} title={title} rows={rows} />
    ))}
    <div className="mt-auto h-10 border border-[#c5c2b2]" />
  </aside>
);

/* ---------- shell ---------- */

const menus = ['_File', '_Edit', '_View', '_Insert', 'F_ormat', '_Tools', '_Draw', 'Dime_nsion', '_Modify', 'E_xpress', '_Window', '_Help'];

const MenuItem = ({ label }) => {
  const [pre, rest] = label.split('_');
  return (
    <button type="button" className="px-[5px]">
      {pre}
      <span className="underline">{rest[0]}</span>
      {rest.slice(1)}
    </button>
  );
};

const ScrollButton = ({ label, children }) => (
  <button type="button" aria-label={label} className="flex h-[17px] w-[17px] shrink-0 items-center justify-center rounded-[2px] border border-white bg-[#c3d3fb] text-[#4d6185] outline outline-1 -outline-offset-1 outline-[#b5c7ee]">
    {children}
  </button>
);

const captionBtn = 'flex h-[21px] w-[21px] items-center justify-center rounded-[3px] border border-white text-white';
const mdiBtn = 'flex h-4 w-4 items-center justify-center border border-b-[#c5c2b0] border-l-white border-r-[#c5c2b0] border-t-white text-[#77756a]';

const Restore = () => (
  <svg viewBox="0 0 12 12" className="h-3 w-3" fill="none" stroke="currentColor" aria-hidden="true">
    <path d="M3.500 4V1.500h7v6H8" />
    <path d="M3 1.500h8M1 5h7" strokeWidth="2" />
    <path d="M1.500 5v5.500h6V5" />
  </svg>
);

const tabNav = ['M4 3v8M12 3v8L6 7z', 'M10 3v8L5 7z', 'M6 3v8l5-4z', 'M12 3v8M4 3v8l6-4z'];

const statusButtons = [
  ['SNAP', 'w-8'], ['GRID', 'w-8'], ['ORTHO', 'w-[43px]', true], ['POLAR', 'w-[41px]'], ['OSNAP', 'w-10'],
  ['OTRACK', 'w-[51px]'], ['DYN', 'w-7'], ['LWT', 'w-[29px]'], ['MODEL', 'w-11', true],
];

export default function App() {
  return (
    <div className="relative flex h-screen flex-col overflow-hidden bg-[#ece9d8] font-['Liberation_Serif','Noto_Sans_CJK_TC',serif] text-[12px] leading-4 text-black">
      <header className="flex h-[26px] shrink-0 items-center bg-[linear-gradient(#2f86f5_0%,#0a5be6_10%,#0453e0_30%,#0263fb_75%,#0260f5_88%,#0340c4_100%)] pl-0.5 pr-[3px]">
        <svg viewBox="0 0 16 16" className="h-4 w-4" aria-hidden="true">
          <rect x="0.500" y="0.500" width="15" height="15" fill="#138b83" stroke="#dff" />
          <path d="M1 10h14M9 1v14" stroke="#9ee" />
          <path d="M2 12L5 3l3 9M11 1v5h4" fill="none" stroke="#fff" strokeWidth="1.200" />
          <circle cx="12" cy="11" r="2" fill="#138b83" stroke="#fff" />
        </svg>
        <h1 className="ml-1 flex-1 text-[13px] font-bold text-white [text-shadow:1px_1px_0_#0a246a]">AutoCAD 2006 - [Drawing2.dwg]</h1>
        <div className="flex gap-0.5">
          <button type="button" aria-label="Minimize" className={`${captionBtn} bg-gradient-to-br from-[#5c8df2] to-[#1c4fd2]`}>
            <span className="mr-1 mt-2.5 h-[3px] w-2 bg-white" />
          </button>
          <button type="button" aria-label="Restore" className={`${captionBtn} bg-gradient-to-br from-[#5c8df2] to-[#1c4fd2]`}>
            <Restore />
          </button>
          <button type="button" aria-label="Close" className={`${captionBtn} bg-gradient-to-br from-[#ee8f78] to-[#cf3a14]`}>
            <X size={16} strokeWidth={3} />
          </button>
        </div>
      </header>

      <nav className="flex h-[21px] shrink-0 items-center pl-[5px] pr-0.5">
        <svg viewBox="0 0 16 16" className="h-4 w-4" aria-hidden="true">
          <rect width="16" height="14" fill="#d4e4f0" stroke="#24527e" />
          <path d="M4 2h9l3 3v11H4z" fill="#0e5590" stroke="#06365e" />
          <path d="M10 4v10M5 9h10M7 6l6 6M13 6l-6 6" stroke="#cfeaff" />
        </svg>
        <div className="flex flex-1">
          {menus.map((m) => (
            <MenuItem key={m} label={m} />
          ))}
        </div>
        <div className="flex gap-0.5">
          <button type="button" aria-label="Minimize drawing" className={mdiBtn}>
            <span className="mt-1.5 h-0.5 w-1.5 bg-[#77756a]" />
          </button>
          <button type="button" aria-label="Restore drawing" className={mdiBtn}>
            <Restore />
          </button>
          <button type="button" aria-label="Close drawing" className={mdiBtn}>
            <X size={12} strokeWidth={4} />
          </button>
        </div>
      </nav>

      <div className="flex shrink-0">
        <Bar className="w-[632px] border-l-0 pl-3">
          <Tools list="new open save | print preview publish | cut copyclip paste match bedit | undo v redo w | pan zoomrt zoomwin zoomprev | props dc palettes ssm markup calc | help" />
        </Bar>
        <Bar className="w-[398px] pl-[10px]">
          <ToolButton name="textstyle" />
          <Combo label="Text style" value="STANDARD" width="w-[100px]" />
          <Sep />
          <ToolButton name="dimstyle" />
          <Combo label="Dimension style" value="STANDARD" width="w-[100px]" />
          <Sep />
          <ToolButton name="tablestyle" />
          <Combo label="Table style" value="Standard" width="w-[100px]" />
        </Bar>
        <Bar className="w-[110px] pl-[10px]">
          <Tools list="abc1 abc2 abc3 abc4" />
        </Bar>
      </div>

      <div className="flex shrink-0">
        <Bar className="w-[387px] border-l-0 pl-3">
          <ToolButton name="layers" />
          <Combo label="Layer" value="0" width="w-[300px]">
            <span className="flex items-center pl-0.5">
              <Icon name="bulb" />
              <Icon name="sun" />
              <Icon name="vpfreeze" />
              <span className="w-1" />
              <Icon name="unlock" />
              <span className="h-[10px] w-[10px] border border-black" />
            </span>
          </Combo>
          <Tools list="laymcur layprev" />
        </Bar>
        <Bar className="w-[591px] gap-1.5 pl-[11px]">
          <Combo label="Color" value="ByLayer" width="w-[150px]">
            <span className="ml-[5px] h-[10px] w-[10px] shrink-0 border border-black" />
          </Combo>
          <Combo label="Linetype" value="ByLayer" width="w-[160px]">
            <span className="ml-1 h-px w-[60px] bg-black" />
          </Combo>
          <Combo label="Lineweight" value="ByLayer" width="w-[125px]">
            <span className="ml-1 h-px w-[35px] bg-black" />
          </Combo>
          <Combo label="Plot style" value="ByColor" width="w-[120px] pl-1" dim />
        </Bar>
        <Bar className="w-[154px] pl-[10px]">
          <Tools list="blk1 blk2 blk3 blk4 blk5 erasex" />
        </Bar>
      </div>

      <div className="flex shrink-0">
        <Bar className="w-[439px] border-l-0 pl-3">
          <Tools list="ostrack osfrom | osend osmid osint osapp osext | oscen osqua ostan | osper ospar osins osnod | osnea osnone | ossnap" />
        </Bar>
        <Bar className="w-[186px] pl-[10px]">
          <Tools list="lib cam vars | ext1 ext2 ext3 lamp" />
        </Bar>
        <Bar className="w-[63px] pl-[10px]">
          <Tools list="xp xs" />
        </Bar>
        <Bar className="w-[220px] pl-[10px]">
          <Tools list="fs1 fs2 | fs3 fs4 fs5 fs6 | fs7 | fs8" />
        </Bar>
        <Bar className="min-w-0 flex-1 overflow-hidden border-r-0 pl-[10px]">
          <Tools list="el1 el2 el3 el4 el5 el6 | el7 el8 el9 el10" />
        </Bar>
      </div>

      <div className="flex min-h-0 flex-1">
        <div className="flex w-[53px] shrink-0 items-start gap-0.5">
          <VBar list="line xline pline polygon rect arc circle cloud spline ellipse ellarc insert mkblock point hatch gradient region table mtext" />
          <div className="flex flex-col gap-0.5">
            <VBar list="erase copy mirror offset array move rotate scale stretch trim extend brkpt brk join chamfer fillet explode" />
            <VBar list="ord1 ord2 ord3 ord4" className="border-t border-t-white" />
          </div>
        </div>

        <main className="flex min-w-0 flex-1 flex-col border-l border-t border-[#716f64]">
          <div className="flex min-h-0 flex-1">
            <div className="relative min-w-0 flex-1 overflow-hidden bg-black">
              <Drawing />
              <div role="tooltip" className="absolute left-[574px] top-[347px] w-[302px] whitespace-pre bg-[#ffffe1] text-center font-['Liberation_Sans',sans-serif] text-[13px] leading-4">
                <p>HATCH</p>
                <p>Layer: 0, Linetype: ByLayer, Color: ByLayer (White)</p>
                <p>Lineweight: ByLayer,  Plot Style: ByLayer</p>
                <p className="pb-0.5">Pattern: STEEL  Area: 7380.6246</p>
              </div>
            </div>
            <div className="flex w-[17px] shrink-0 flex-col items-center justify-between bg-[#f3f3ee]">
              <ScrollButton label="Scroll up"><ChevronUp size={12} strokeWidth={4} /></ScrollButton>
              <div className="mt-[112px] flex h-4 w-4 flex-col items-center justify-center gap-px rounded-[2px] border border-[#98b4e8] bg-[#c8d7fb]">
                <span className="h-px w-2 bg-[#8ba6df]" />
                <span className="h-px w-2 bg-[#8ba6df]" />
                <span className="h-px w-2 bg-[#8ba6df]" />
                <span className="h-px w-2 bg-[#8ba6df]" />
              </div>
              <ScrollButton label="Scroll down"><ChevronDown size={12} strokeWidth={4} /></ScrollButton>
            </div>
          </div>
          <div className="flex h-4 shrink-0">
            <div className="flex">
              {tabNav.map((d) => (
                <button key={d} type="button" aria-label="Browse tabs" className="w-[18px] border border-b-[#aca899] border-l-white border-r-[#aca899] border-t-white">
                  <svg viewBox="0 0 16 14" className="h-[14px] w-4" stroke="#000" aria-hidden="true"><path d={d} /></svg>
                </button>
              ))}
            </div>
            <div className="relative ml-1 flex w-[100px]">
              <svg viewBox="0 0 100 16" className="absolute inset-0 h-4 w-[100px]" aria-hidden="true">
                <path d="M46 15.500h43L95 0" fill="none" stroke="#000" />
                <path d="M0 0h54l-5 15.500H5z" fill="#000" />
                <path d="M2 0l5 15M47 15L52 0" stroke="#ece9d8" />
              </svg>
              <button type="button" className="relative w-[50px] text-center font-bold text-white">Model</button>
              <button type="button" className="relative w-10 text-center">配置1</button>
            </div>
            <div className="flex-1" />
            <div className="flex w-[331px] items-center bg-[#f6f5f1]">
              <span className="h-full w-[5px] border border-[#c5c2b0] bg-[#ece9d8]" />
              <ScrollButton label="Scroll left"><ChevronLeft size={12} strokeWidth={4} /></ScrollButton>
            </div>
          </div>
        </main>
        <div className="w-[7px] shrink-0 border-l border-white" />
        <Palette />
      </div>

      <div className="shrink-0 border-t-2 border-white pt-1">
        <div className="border-t border-black pl-4 pt-[5px]">
          <div className="border-l-2 border-t-2 border-black bg-white font-['Liberation_Mono',monospace] text-[13px] leading-[13px]">
            <div className="h-[30px] pt-px">
              <p>Analyzing internal islands...</p>
              <p>Pick internal point or [Select objects/remove Boundaries]:</p>
            </div>
            <label className="flex h-[17px] items-center border-t border-[#aca899]">
              Command:
              <input aria-label="Command" className="flex-1 bg-transparent outline-none" />
            </label>
          </div>
        </div>
      </div>

      <footer className="mt-px flex h-6 shrink-0 items-center gap-1 border-t border-[#aca899] pl-[5px] pr-0.5 pt-1">
        <output className="h-[18px] w-[238px] border border-b-white border-l-[#aca899] border-r-white border-t-[#aca899] pl-px">531.9801, -11.8134, 0.0000</output>
        {statusButtons.map(([label, width, on]) => (
          <button
            key={label as string}
            type="button"
            className={`h-[18px] border text-center ${on ? 'border-b-white border-l-black border-r-white border-t-black' : 'border-b-[#aca899] border-l-white border-r-[#aca899] border-t-white'} ${width}`}
          >
            {label}
          </button>
        ))}
        <div className="ml-auto flex items-center gap-1.5">
          <span className="flex h-[18px] w-[18px] items-center justify-center border border-[#716f64] bg-[#c0bdb0]">
            <span className="border border-black bg-[#00e6e6] px-0.5 font-['Liberation_Sans'] text-[9px] font-bold leading-[9px]">AI</span>
          </span>
          <span className="flex h-[18px] items-center gap-1 border border-[#aca899] px-[3px]">
            <Icon name="comm" />
            <Icon name="padlock" />
          </span>
          <span className="text-[8px]">▼</span>
        </div>
      </footer>

      <div className="absolute bottom-[29px] right-[3px] h-[74px] w-[291px] rounded-[14px] border-2 border-black bg-[#ffffe1]">
        <svg viewBox="0 0 16 16" className="absolute left-2 top-1.5 h-4 w-4" aria-hidden="true">
          <path d="M8 0a7 6.500 0 0 0-2 12.700L9 16v-3A7 6.500 0 0 0 8 0z" fill="#dfeafa" stroke="#7c98c8" />
          <path d="M8 2.500v2M6.500 6H8v5M6.500 11h3.500" stroke="#173f9e" strokeWidth="1.800" fill="none" />
        </svg>
        <div className="flex items-start justify-between pl-[33px] pr-2">
          <h2 className="pt-1.5 text-[13px] font-bold leading-4">Communication Center</h2>
          <button type="button" aria-label="Close" className="mt-1.5 flex h-4 w-4 items-center justify-center border border-[#716f64] bg-[#ece9d8]">
            <X size={11} strokeWidth={4} />
          </button>
        </div>
        <p className="whitespace-nowrap pl-[13px] pt-1">The easy way to keep you and your software up-to-date.</p>
        <a href="#communication" className="ml-[13px] mt-0.5 block text-[#0000ee] underline">Click here.</a>
        <svg viewBox="0 0 44 24" className="absolute left-[203px] top-[68px] h-6 w-11" aria-hidden="true">
          <path d="M2 2.500L42 21 20 2.500" fill="#ffffe1" />
          <path d="M2 3.500L42 21 20 3.500" fill="none" stroke="#000" strokeWidth="1.500" />
          <path d="M3.500 2.500h16" stroke="#ffffe1" strokeWidth="3" />
        </svg>
      </div>
    </div>
  );
}
